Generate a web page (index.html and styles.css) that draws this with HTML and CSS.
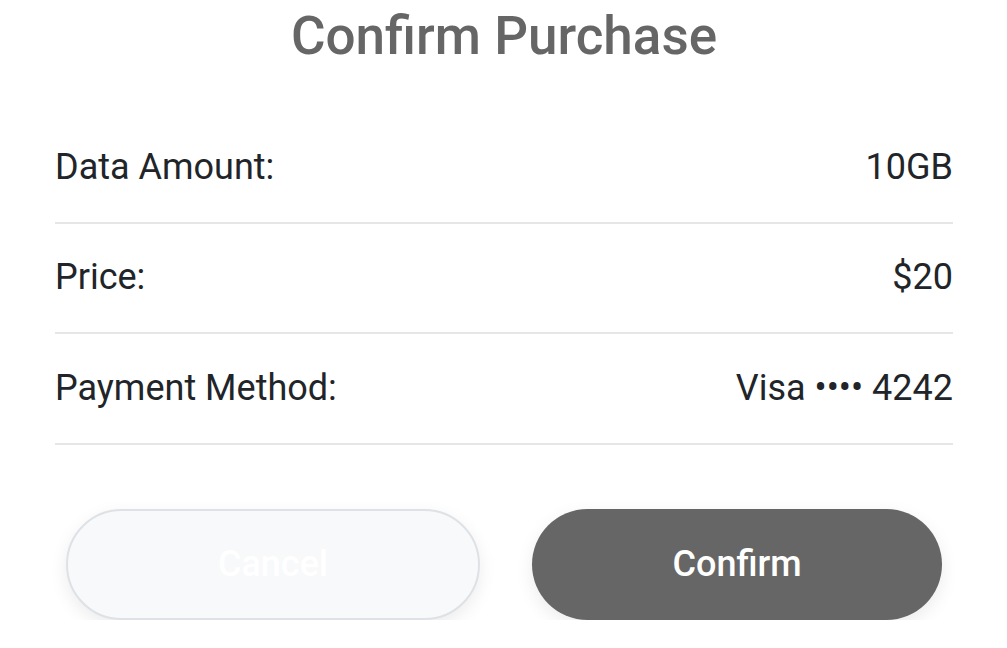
FILE: index.html
```html
<!DOCTYPE html>
<html lang="en">
<head>
<meta charset="utf-8">
<title>Confirm Purchase</title>
<link rel="stylesheet" href="styles.css">
</head>
<body>
<div class="sheet">
  <h1 class="title">Confirm Purchase</h1>
  <div class="details">
    <div class="row"><span class="label">Data Amount:</span><span class="value">10GB</span></div>
    <div class="row"><span class="label">Price:</span><span class="value">$20</span></div>
    <div class="row"><span class="label">Payment Method:</span><span class="value">Visa •••• 4242</span></div>
  </div>
  <div class="actions">
    <button class="btn btn-cancel">Cancel</button>
    <button class="btn btn-confirm">Confirm</button>
  </div>
</div>
</body>
</html>
```

FILE: styles.css
```css
html, body {
  margin: 0;
  padding: 0;
  background: #ffffff;
}
body {
  font-family: Roboto, "Liberation Sans", sans-serif;
  color: #212529;
}
.sheet {
  padding: 0 54px 0 55px;
}
.title {
  margin: 0;
  height: 113px;
  box-sizing: border-box;
  padding-top: 6px;
  text-align: center;
  font-size: 53px;
  font-weight: 500;
  line-height: 60px;
  color: #666666;
}
.row {
  display: flex;
  justify-content: space-between;
  align-items: center;
  height: 110.5px;
  box-sizing: border-box;
  border-bottom: 2px solid #e6e6e6;
  font-size: 36px;
  padding-bottom: 1px;
}
.actions {
  display: flex;
  gap: 52px;
  padding: 64px 11px 0;
}
.btn {
  flex: 1 1 0;
  min-width: 0;
  box-sizing: border-box;
  height: 111px;
  border-radius: 56px;
  font-family: Roboto, "Liberation Sans", sans-serif;
  font-size: 36px;
  font-weight: 500;
  color: #ffffff;
  cursor: pointer;
  box-shadow: 0 6px 18px rgba(0, 0, 0, 0.08);
}
.btn-cancel {
  background: #f8f9fa;
  border: 2px solid #dee2e6;
}
.btn-confirm {
  background: #666666;
  border: none;
}
```
